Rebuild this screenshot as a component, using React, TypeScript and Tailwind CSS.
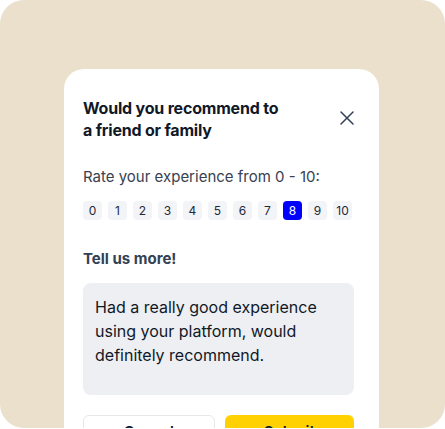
import React, { useState } from 'react';

const scores = [0, 1, 2, 3, 4, 5, 6, 7, 8, 9, 10];

const App: React.FC = () => {
  const [score, setScore] = useState(8);

  return (
    <div className="w-[445px] h-[429px] bg-white font-['Inter',sans-serif]">
      <div className="h-[428px] rounded-[24px] bg-[#EBE0CC] overflow-hidden pt-[69px] pl-[64px]">
        {/* Feedback card */}
        <div className="w-[315px] rounded-[20px] bg-white pl-[19px] pr-[25px] pt-[28px] pb-6">
          <div className="flex items-start justify-between">
            <h2 className="text-[16px] leading-[22px] font-bold text-[#111827] tracking-[-0.2px]">
              Would you recommend to
              <br />
              a friend or family
            </h2>
            <button className="mt-[14px] text-[#334155]" aria-label="Close">
              <svg width="14" height="14" viewBox="0 0 14 14" fill="none" stroke="currentColor" strokeWidth="1.5" strokeLinecap="round">
                <path d="M1 1L13 13M13 1L1 13" />
              </svg>
            </button>
          </div>

          <p className="mt-[26px] text-[15px] leading-[20px] text-[#374151]">Rate your experience from 0 - 10:</p>

          <div className="mt-[14px] flex gap-[6px]">
            {scores.map((n) => (
              <button
                key={n}
                onClick={() => setScore(n)}
                className={
                  n === score
                    ? 'w-[19px] h-[19px] rounded-[4px] bg-[#0000FF] text-white text-[12px] flex items-center justify-center'
                    : 'w-[19px] h-[19px] rounded-[4px] bg-[#F3F4F7] text-[#1F2937] text-[12px] flex items-center justify-center'
                }
              >
                {n}
              </button>
            ))}
          </div>

          <p className="mt-[29px] text-[15px] leading-[20px] font-bold text-[#334155]">Tell us more!</p>

          <textarea
            readOnly
            defaultValue="Had a really good experience using your platform, would definitely recommend."
            className="mt-[14px] block w-[271px] h-[112px] resize-none rounded-[8px] bg-[#EDEFF3] px-3 pt-3 text-[16px] leading-[24px] text-[#111827] outline-none"
          />

          <div className="mt-[20px] flex gap-[10px] w-[271px]">
            <button className="flex-1 h-[35px] rounded-[6px] border border-[#E5E7EB] bg-white text-[15px] font-semibold text-[#111827]">
              Cancel
            </button>
            <button className="flex-1 h-[35px] rounded-[6px] bg-[#FFD100] text-[15px] font-semibold text-[#111827]">
              Submit
            </button>
          </div>
        </div>
      </div>
    </div>
  );
};

export default App;
